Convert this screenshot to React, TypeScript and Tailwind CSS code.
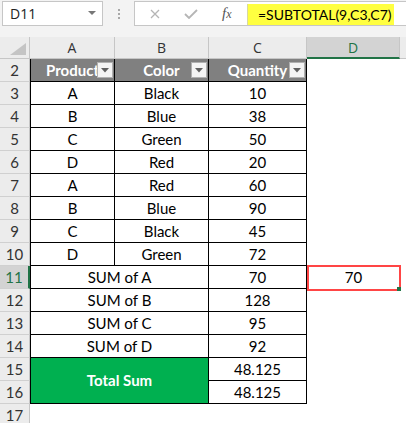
import React from "react";

const font = { fontFamily: "Lato, 'Liberation Sans', sans-serif" };

const data = [
  ["A", "Black", "10"],
  ["B", "Blue", "38"],
  ["C", "Green", "50"],
  ["D", "Red", "20"],
  ["A", "Red", "60"],
  ["B", "Blue", "90"],
  ["C", "Black", "45"],
  ["D", "Green", "72"],
];

const sums = [
  ["SUM of A", "70"],
  ["SUM of B", "128"],
  ["SUM of C", "95"],
  ["SUM of D", "92"],
];

function RowHead({ n, active }: { n: number; active?: boolean }) {
  return (
    <div
      className={`flex items-center justify-center border-b border-[#d0d0d0] text-[15px] ${
        active ? "bg-[#d3d3d3] text-[#217346] border-r-2 border-r-[#217346]" : "bg-[#ececec] text-[#333] border-r border-r-[#c6c6c6]"
      }`}
    >
      {n}
    </div>
  );
}

function FilterBtn() {
  return (
    <span className="absolute right-[1px] top-[3px] w-[16px] h-[16px] bg-[#f4f4f4] border border-[#b0b0b0] flex items-center justify-center">
      <svg width="8" height="5" viewBox="0 0 8 5">
        <polygon points="0,0 8,0 4,4.5" fill="#606060" />
      </svg>
    </span>
  );
}

function FormulaBar() {
  return (
    <div className="h-[37px] bg-[#f3f3f3] flex items-start pt-[1px] pl-[2px]">
      <div className="w-[101px] h-[25px] bg-white border border-[#c6c6c6] flex items-center pl-[7px] pr-[6px] text-[#222]">
        <span className="flex-1" style={{ fontFamily: "'Open Sans', sans-serif", fontSize: 14 }}>D11</span>
        <svg width="8" height="5" viewBox="0 0 8 5">
          <polygon points="0,0 8,0 4,4" fill="#777" />
        </svg>
      </div>
      <div className="w-[31px] h-[25px] flex flex-col items-center justify-center gap-[2px]">
        <span className="w-[2px] h-[2px] bg-[#a8a8a8]" />
        <span className="w-[2px] h-[2px] bg-[#a8a8a8]" />
        <span className="w-[2px] h-[2px] bg-[#a8a8a8]" />
      </div>
      <div className="flex-1 h-[25px] bg-white border-y border-l border-[#c6c6c6] flex items-start">
        <div className="w-[112px] shrink-0 h-full flex items-center">
          <svg width="10" height="10" viewBox="0 0 10 10" className="ml-[15px]">
            <path d="M1 1 L9 9 M9 1 L1 9" stroke="#b5b5b5" strokeWidth="1.3" />
          </svg>
          <svg width="14" height="10" viewBox="0 0 14 10" className="ml-[24px]">
            <path d="M1 5 L5 9 L13 1" stroke="#b5b5b5" strokeWidth="1.8" fill="none" />
          </svg>
          <span className="ml-[24px] text-[#555] italic text-[15px]" style={{ fontFamily: "'Liberation Serif', serif" }}>
            f<span className="text-[12px]">x</span>
          </span>
        </div>
        <div className="mt-[2px] w-[147px] shrink-0 h-[21px] bg-[#ffff40] border-l border-[#d8d8a0] flex items-center pl-[10px] text-[14px] text-black whitespace-nowrap" style={font}>
          =SUBTOTAL(9,C3,C7)
        </div>
      </div>
    </div>
  );
}

export default function App() {
  const cell = "flex items-center justify-center border-b border-r border-black text-[15px]";
  const hdr = { fontFamily: "'Open Sans', sans-serif", fontSize: 14 };
  return (
    <div className="w-[406px] h-[423px] overflow-hidden bg-white relative text-black" style={font}>
      <FormulaBar />
      <div className="grid grid-cols-[30px_85px_94px_98px_93px_6px] grid-rows-[22px_repeat(16,23px)]">
        {/* column headers */}
        <div className="relative bg-[#ececec] border-r border-b border-[#c6c6c6]">
          <svg width="16" height="12" viewBox="0 0 16 12" className="absolute right-[3px] bottom-[3px]">
            <polygon points="16,0 16,12 0,12" fill="#c4c4c4" />
          </svg>
        </div>
        {["A", "B", "C"].map((c) => (
          <div key={c} className="flex items-center justify-center bg-[#ececec] border-r border-b border-[#c6c6c6] text-[#333]" style={hdr}>
            {c}
          </div>
        ))}
        <div className="flex items-center justify-center bg-[#d3d3d3] border-r border-[#c6c6c6] border-b-2 border-b-[#217346] text-[#217346]" style={hdr}>
          D
        </div>
        <div className="bg-[#ececec] border-b border-[#c6c6c6]" />

        {/* row 2 table header */}
        <RowHead n={2} />
        {["Product", "Color", "Quantity"].map((h, i) => (
          <div key={h} className={`relative overflow-hidden bg-[#808080] font-bold text-white ${cell} ${i === 0 ? "border-l" : ""}`}>
            <span className="whitespace-nowrap">{h}</span>
            <FilterBtn />
          </div>
        ))}
        <div />
        <div />

        {data.map((r, i) => (
          <React.Fragment key={i}>
            <RowHead n={i + 3} />
            <div className={`${cell} border-l`}>{r[0]}</div>
            <div className={cell}>{r[1]}</div>
            <div className={cell}>{r[2]}</div>
            <div />
            <div />
          </React.Fragment>
        ))}

        {sums.map((s, i) => (
          <React.Fragment key={s[0]}>
            <RowHead n={i + 11} active={i === 0} />
            <div className={`${cell} border-l col-span-2`}>{s[0]}</div>
            <div className={cell}>{s[1]}</div>
            <div className="relative flex items-center justify-center text-[15px]">
              {i === 0 && (
                <>
                  70
                  <span className="absolute left-0 -top-[1px] w-[94px] h-[26px] border-2 border-[#ff4545]" />
                  <span className="absolute -right-[1px] -bottom-[2px] w-[4px] h-[4px] bg-[#217346]" />
                </>
              )}
            </div>
            <div />
          </React.Fragment>
        ))}

        <RowHead n={15} />
        <div className={`${cell} border-l col-span-2 row-span-2 bg-[#00b050] text-white font-bold`}>Total Sum</div>
        <div className={cell}>48.125</div>
        <div />
        <div />

        <RowHead n={16} />
        <div className={cell}>48.125</div>
        <div />
        <div />

        <RowHead n={17} />
      </div>
    </div>
  );
}
